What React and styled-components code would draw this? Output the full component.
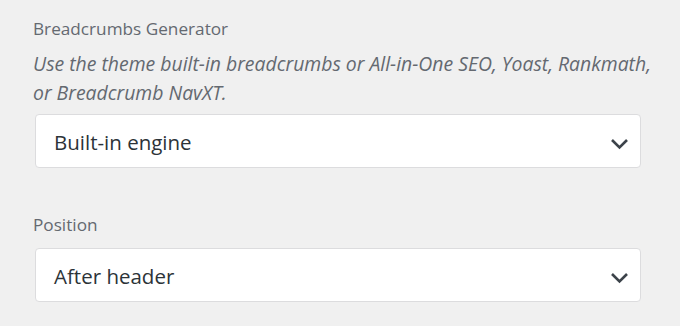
import React from "react";
import styled, { createGlobalStyle } from "styled-components";

const Global = createGlobalStyle`
  html, body { margin: 0; padding: 0; background: #f0f0f0; }
  body { font-family: "Open Sans", "Noto Sans", sans-serif; }
`;

const Page = styled.div`
  width: 680px;
  height: 326px;
  box-sizing: border-box;
  padding: 17px 39px 0 33px;
  display: flex;
  flex-direction: column;
  gap: 45px;
`;

const Field = styled.div`
  display: flex;
  flex-direction: column;
`;

const Label = styled.div`
  font-size: 17.2px;
  line-height: 24px;
  color: #646970;
  margin-bottom: ${(p) => p.$mb || 0}px;
`;

const Description = styled.div`
  font-style: italic;
  font-size: 19.4px;
  line-height: 29px;
  color: #646970;
  margin-bottom: 7px;
  white-space: nowrap;
`;

const Select = styled.div`
  margin-left: 2px;
  height: 54px;
  box-sizing: border-box;
  background: #fff;
  border: 1px solid #dcdcde;
  border-radius: 4px;
  display: flex;
  align-items: center;
  justify-content: space-between;
  padding: 1px 11px 0 18px;
  font-size: 20.5px;
  color: #2c3338;
`;

const ChevronIcon = styled.svg`
  margin-top: 4px;
  flex: none;
`;

const Chevron = () => (
  <ChevronIcon width="19" height="12" viewBox="0 0 19 12" fill="none">
    <path d="M2 2 L9.5 9.5 L17 2" stroke="#3c434a" strokeWidth="2.6" />
  </ChevronIcon>
);

export default function App() {
  return (
    <>
      <Global />
      <Page>
        <Field>
          <Label $mb={8}>Breadcrumbs Generator</Label>
          <Description>
            Use the theme built-in breadcrumbs or All-in-One SEO, Yoast, Rankmath,
            <br />
            or Breadcrumb NavXT.
          </Description>
          <Select>
            Built-in engine
            <Chevron />
          </Select>
        </Field>
        <Field>
          <Label $mb={11}>Position</Label>
          <Select>
            After header
            <Chevron />
          </Select>
        </Field>
      </Page>
    </>
  );
}
